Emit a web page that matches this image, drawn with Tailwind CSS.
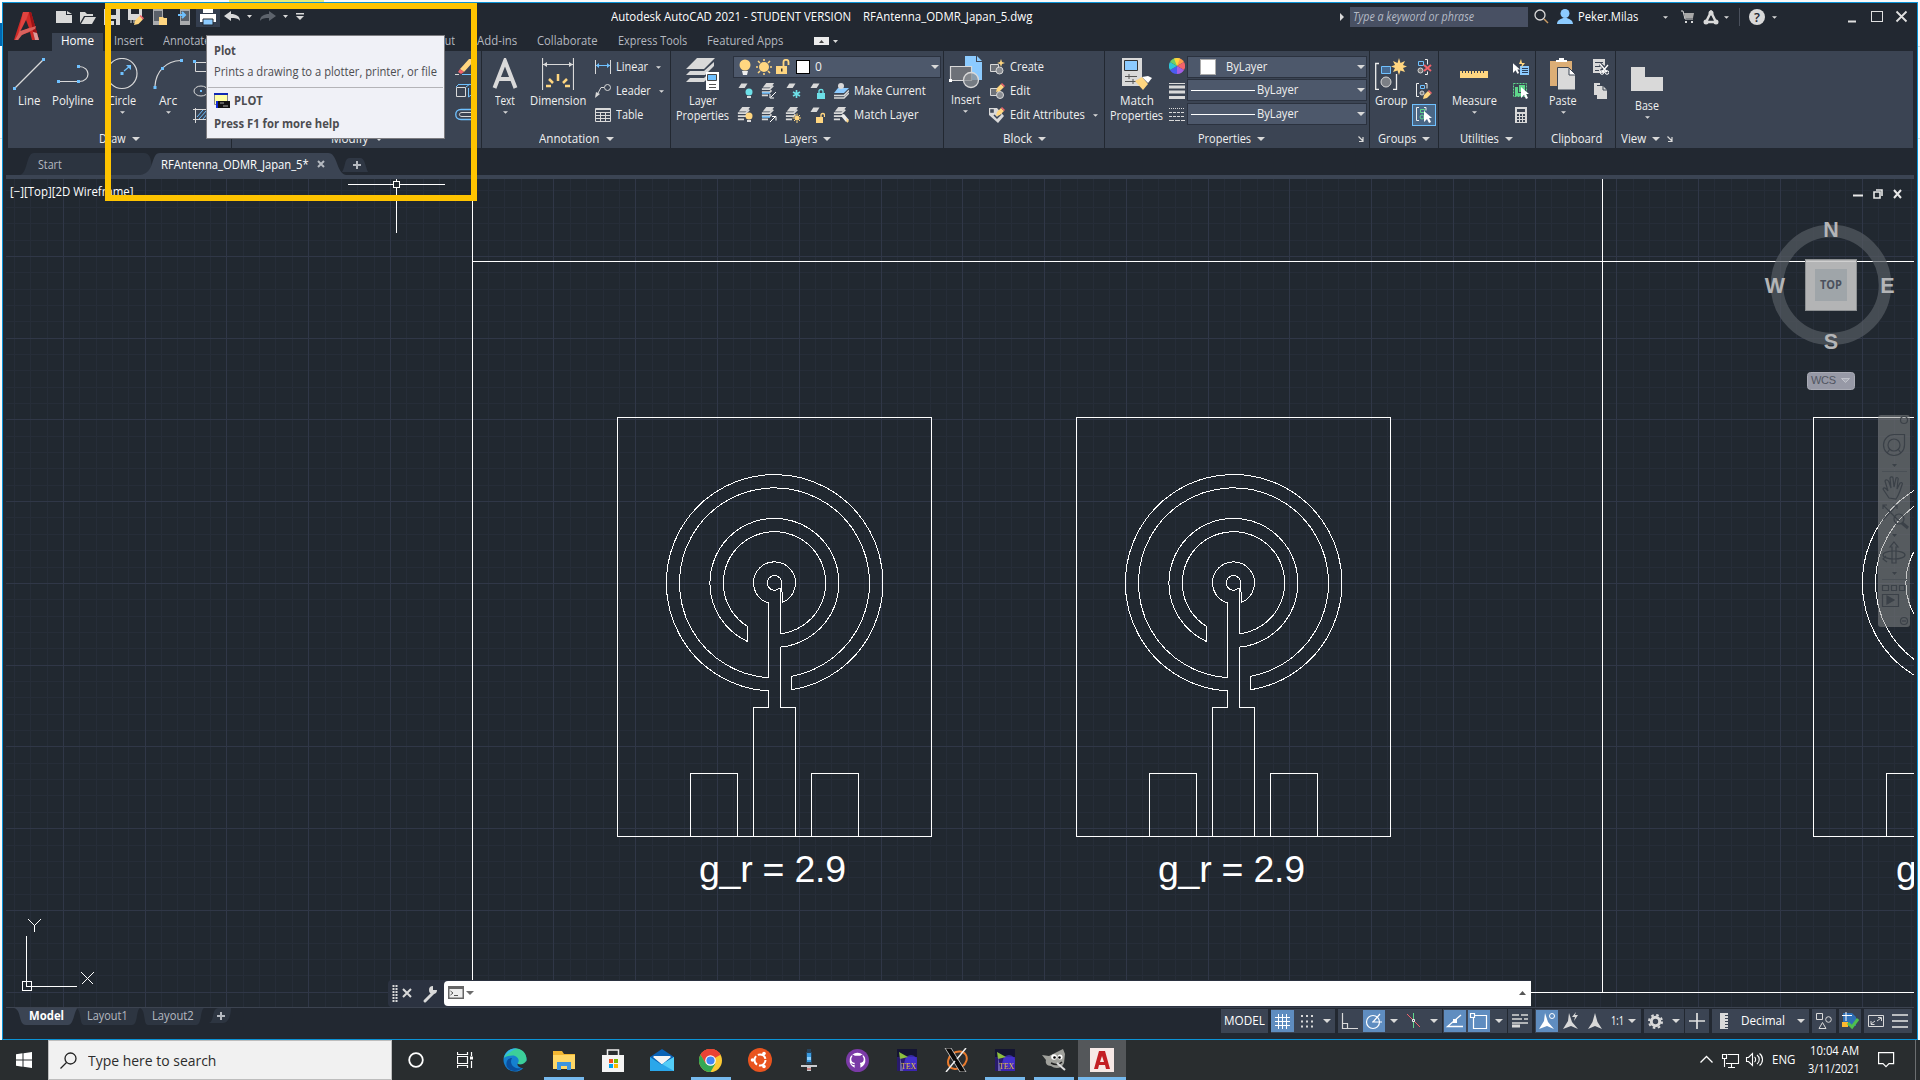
<!DOCTYPE html>
<html lang="en">
<head>
<meta charset="utf-8">
<title>Autodesk AutoCAD 2021</title>
<script src="https://cdn.jsdelivr.net/npm/@tailwindcss/browser@4"></script>
</head>
<body class="relative h-[1080px] w-[1920px] overflow-hidden bg-[#fbfbfb] font-['Open_Sans','Noto_Sans',sans-serif] text-[12px] leading-[14px] whitespace-nowrap text-[#f0f0f0]">

<!-- shared symbols -->
<svg class="hidden">
  <defs>
    <symbol id="dn" viewBox="0 0 8 4"><path d="M0 0h8L4 4z" fill="#d9d9d9"/></symbol>
    <symbol id="layers" viewBox="0 0 16 16"><path d="M6 0h9l-4 5H2z" fill="#d9d9d9"/><path d="M1 7h9l4-4M1 10.500h9l2-2M1 14h7" stroke="#d9d9d9" stroke-width="2" fill="none"/></symbol>
    <symbol id="sheet" viewBox="0 0 16 16"><path d="M5 1h11l-5 8H0z" fill="#d9d9d9"/></symbol>
    <symbol id="launch" viewBox="0 0 6 6"><path d="M.5.5l4 4M5 1v4.5H1" fill="none" stroke="#d9d9d9" stroke-width="1.2"/></symbol>
    <symbol id="pencil" viewBox="0 0 9 9"><path d="M0 9l1-4 4-4 3 3-4 4z" fill="#ffd680"/><path d="M5 1l1-1 3 3-1 1z" fill="#f2636b"/></symbol>
    <symbol id="ptr" viewBox="0 0 8 12"><path d="M0 0l8 7H5l2 4-2 1-2-4-3 3z" fill="#fff"/></symbol>
    <symbol id="tex" viewBox="0 0 20 22"><rect width="20" height="22" fill="#281a6c"/><rect y="0" width="20" height="8" fill="#141433"/><path d="M9 8h11v14H4z" fill="#3b25b0"/><circle cx="14" cy="12" r="6" fill="#4635d6" opacity=".7"/><path d="M2 3l9 5-8 2z" fill="#8dbf3f"/><path d="M3 8l3 14H3z" fill="#6a5fae"/><text x="4" y="19.500" font-family="Liberation Serif,serif" font-size="9" textLength="15" lengthAdjust="spacingAndGlyphs" fill="#e6c23a">TEX</text></symbol>
    <g id="antenna" fill="none" stroke="#fff">
      <path d="M617.500 417.500h314v419h-314zM690.500 836v-62.500h47V836M811.500 836v-62.500h47V836"/>
      <path d="M753.500 836V707.500H768.500V691A108.300 108.300 0 1 1 791.500 689.850V676.350A95 95 0 1 0 768.500 677.700V603A21 21 0 1 1 782.500 602.300L781.500 581A7.300 7.300 0 1 0 779.500 588.200"/>
      <path d="M780.500 588V633.750A51.200 51.200 0 1 0 747.500 626.400V641.500A64.500 64.500 0 1 0 780.500 647.100" stroke="none"/>
      <path d="M780.500 588V633.750A51.200 51.200 0 1 0 747.500 626.400V641.500A64.500 64.500 0 1 1 780.500 647.100V707.500H795.500V836"/>
    </g>
  </defs>
</svg>

<!-- slivers of the window behind -->
<div class="absolute top-0 left-[229px] h-[2px] w-[95px] bg-[#e4ec7c]"></div>
<div class="absolute top-[23px] left-0 h-[23px] w-[2px] bg-[#0067b0]"></div>
<div class="absolute top-[138px] left-0 h-px w-[1920px] bg-[#dcdcdc]"></div>
<div class="absolute top-[46px] right-0 h-px w-[4px] bg-[#dcdcdc]"></div>

<main class="relative mt-[2px] ml-[2px] flex h-[1038px] w-[1916px] flex-col border border-[#0b93d6] bg-[#222831]">
  <!-- title bar and ribbon tabs -->
  <header class="flex h-[48px] shrink-0">
    <div class="w-[49px] pt-[8px] pl-[10px]">
      <svg width="27" height="30" viewBox="0 0 27 30"><path d="M10 1h8l8 28h-7l-2-8-9 3-3 5H1z" fill="#cf2a27"/><path d="M10 1h6l-6 17-5 6z" fill="#e04440"/><path d="M16 1h2l8 28h-4z" fill="#9c1316"/><path d="M13 9l3 8-9 4z" fill="#222831"/><path d="M2 29l5-9 16-5-1 3-13 6-4 5z" fill="#d9625e"/><path d="M20 21l2 8h4l-2-7z" fill="#d99"/></svg>
    </div>
    <div class="flex flex-1 flex-col">
      <div class="flex h-[30px] items-center pb-[2px]">
        <svg class="block" width="260" height="20" viewBox="52 7 260 20">
          <path d="M56 11h10v4h6v8H56zM67 11l5 3h-5z" fill="#d9d9d9"/>
          <path d="M80 12h5l2 2h6v2h-9l-4 7z" fill="#d9d9d9"/><path d="M85 17h11l-4 7H81z" fill="#d9d9d9"/>
          <path d="M104 9h16v16h-16z" fill="#d9d9d9"/><path d="M108 9h8v6h-8zM108 19h8v6h-8z" fill="#222831"/><path d="M109 21h5v4h-5z" fill="#d9d9d9"/>
          <path d="M128 9h14v11h-14z" fill="#d9d9d9"/><path d="M131 9h8v5h-8z" fill="#222831"/><path d="M131 19v4M134 19v4" stroke="#d9d9d9"/><use href="#pencil" x="134" y="15" width="10" height="10"/>
          <rect x="153" y="9" width="10" height="16" fill="#a9abae"/><rect x="154" y="11" width="8" height="10" fill="#5a6069"/><path d="M159 17h4l1 1h3v7h-8z" fill="#ffd680"/>
          <rect x="180" y="9" width="10" height="16" fill="#a9abae"/><rect x="181" y="11" width="8" height="10" fill="#5a6069"/><path d="M178 15h6M182 12l3 3-3 3" stroke="#6fc1ff" stroke-width="2" fill="none"/>
          <rect x="196" y="7" width="24" height="20" fill="#343e4f"/><path d="M203 9h10v4h-10zM200 14h16v8h-16z" fill="#fff"/><path d="M203 19h10v6h-10z" fill="#8ccbff" stroke="#222831"/>
          <path d="M224 16l7-5v3c5 0 9 2 9 7-2-3-5-3-9-3v3z" fill="#d9d9d9"/>
          <path d="M247 15h5l-2.500 3zM283 15h5l-2.500 3z" fill="#d9d9d9"/>
          <path d="M276 16l-7-5v3c-5 0-9 2-9 7 2-3 5-3 9-3v3z" fill="#5d636c"/>
          <path d="M296 13h8v1.500h-8zM296 16h8l-4 4z" fill="#d9d9d9"/>
        </svg>
        <span data-w="240" class="ml-[299px] text-white">Autodesk AutoCAD 2021 - STUDENT VERSION</span>
        <span data-w="169" class="ml-[12px] text-white">RFAntenna_ODMR_Japan_5.dwg</span>
        <svg class="ml-[308px]" width="4" height="8"><path d="M0 0v8l4-4z" fill="#d9d9d9"/></svg>
        <div class="ml-[6px] flex h-[20px] w-[178px] items-center bg-[#485063] pl-[3px] text-[#b4bac5] italic"><span data-w="121">Type a keyword or phrase</span></div>
        <svg class="ml-[6px]" width="15" height="16"><circle cx="6" cy="6" r="5" fill="none" stroke="#d9d9d9" stroke-width="1.300"/><path d="M10 10l4 4" stroke="#c99a63" stroke-width="1.500"/></svg>
        <svg class="ml-[8px]" width="16" height="16"><circle cx="8" cy="4.500" r="4.500" fill="#8ccbff"/><path d="M0 15c0-4 4-5 6-6h4c2 1 6 2 6 6z" fill="#8ccbff"/></svg>
        <span data-w="60" class="ml-[5px] text-white">Peker.Milas</span>
        <svg class="ml-[25px]" width="5" height="3"><use href="#dn"/></svg>
        <svg class="ml-[13px]" width="14" height="14"><path d="M0 1h2l2 8h8" fill="none" stroke="#d9d9d9"/><path d="M3 3h10l-1 5H4z" fill="#a8a8a8"/><path d="M4 11h2v2H4zM10 11h2v2h-2z" fill="#d9d9d9"/></svg>
        <svg class="ml-[8px]" width="16" height="15"><path d="M8 2L3 12h10z" fill="none" stroke="#d9d9d9" stroke-width="2.500"/><circle cx="8" cy="3" r="2.500" fill="#d9d9d9"/><circle cx="3" cy="12" r="2.500" fill="#d9d9d9"/><circle cx="13" cy="12" r="2.500" fill="#d9d9d9"/></svg>
        <svg class="ml-[5px]" width="5" height="3"><use href="#dn"/></svg>
        <div class="ml-[10px] h-[18px] w-px bg-[#4a505c]"></div>
        <div class="ml-[9px] flex h-[16px] w-[16px] items-center justify-center rounded-full bg-[#d9d9d9] text-[13px] font-semibold text-[#222831]">?</div>
        <svg class="ml-[7px]" width="5" height="3"><use href="#dn"/></svg>
        <svg class="ml-[71px]" width="60" height="14"><path d="M0 11.500h8" stroke="#e0e0e0" stroke-width="2"/><rect x="23.500" y="1.500" width="11" height="10" fill="none" stroke="#e0e0e0"/><path d="M48.500 1.500l10 10M58.500 1.500l-10 10" stroke="#e0e0e0" stroke-width="1.800"/></svg>
      </div>
      <nav class="flex h-[18px] items-center pb-[2px] text-[#b5b9c0]">
        <div class="-mb-[2px] flex h-[18px] w-[51px] items-center justify-center bg-[#3b4453] pb-[2px] text-white"><span data-w="33">Home</span></div>
        <span data-w="29" class="ml-[11px]">Insert</span>
        <span data-w="48" class="ml-[20px]">Annotate</span>
        <span data-w="35" class="ml-[209px]">Output</span>
        <span data-w="40" class="ml-[22px]">Add-ins</span>
        <span data-w="61" class="ml-[20px]">Collaborate</span>
        <span data-w="69" class="ml-[20px]">Express Tools</span>
        <span data-w="76" class="ml-[20px]">Featured Apps</span>
        <svg class="ml-[31px]" width="26" height="8"><rect width="15" height="8" fill="#ececec"/><path d="M5 6h5l-2.500-3z" fill="#444"/><path d="M19 3h5l-2.500 3z" fill="#d9d9d9"/></svg>
      </nav>
    </div>
  </header>

  <!-- ribbon -->
  <div class="ml-[5px] flex h-[97px] w-[1905px] shrink-0 gap-px">
    <!-- Draw -->
    <section class="flex h-full w-[223px] flex-col bg-[#3b4453]">
      <div class="flex h-[79px]">
        <div class="flex w-[42px] flex-col items-center pt-[7px]"><svg width="32" height="32"><path d="M2 30L30 2" stroke="#d9d9d9" stroke-width="1.300"/><path d="M0 29h3v3H0zM29 0h3v3h-3z" fill="#6fc1ff"/></svg><span data-w="22" class="mt-[4px]">Line</span></div>
        <div class="flex w-[45px] flex-col items-center pt-[7px]"><svg width="32" height="32"><path d="M2 23.500h20c12 0 12-15 0-15" fill="none" stroke="#d9d9d9" stroke-width="1.200"/><path d="M0 22h3v3H0zM20 22h3v3h-3zM20 7h3v3h-3z" fill="#6fc1ff"/></svg><span data-w="42" class="mt-[4px]">Polyline</span></div>
        <div class="ml-[4px] flex w-[46px] flex-col items-center pt-[7px]"><svg width="32" height="32"><circle cx="16" cy="15.500" r="15" fill="none" stroke="#d9d9d9" stroke-width="1.200"/><path d="M18 13l6-5" stroke="#6fc1ff" stroke-width="1.200"/><path d="M14.500 14h3v3h-3zM20 7h5v5z" fill="#6fc1ff"/></svg><span data-w="28" class="mt-[4px]">Circle</span><svg class="mt-[3px]" width="5" height="3"><use href="#dn"/></svg></div>
        <div class="flex w-[46px] flex-col items-center pt-[7px]"><svg width="32" height="32"><path d="M3 28C4 13 14 3 29 2.500" fill="none" stroke="#d9d9d9" stroke-width="1.200"/><path d="M1.500 28h3v3h-3zM28 1h3v3h-3zM9 9h3v3H9z" fill="#6fc1ff"/></svg><span data-w="18" class="mt-[4px]">Arc</span><svg class="mt-[3px]" width="5" height="3"><use href="#dn"/></svg></div>
        <svg class="mt-[9px] ml-[2px]" width="30" height="66"><path d="M2.500 2.500h24v9h-24z" fill="none" stroke="#d9d9d9"/><path d="M0 0h3v3H0z" fill="#6fc1ff"/><ellipse cx="8" cy="31" rx="7" ry="5" fill="none" stroke="#d9d9d9"/><path d="M7 30h2v2H7z" fill="#6fc1ff"/><path d="M2.500 48v15M0 49.500h16M0 59.500h16" stroke="#d9d9d9"/><path d="M4 57l6-7M6 59l8-9M10 59l5-6" stroke="#6fc1ff"/></svg>
      </div>
      <div class="flex h-[18px] items-center pl-[91px]"><span data-w="27">Draw</span><svg class="ml-[6px]" width="8" height="4"><use href="#dn"/></svg></div>
    </section>
    <!-- Modify -->
    <section class="flex h-full w-[249px] flex-col bg-[#3b4453]">
      <div class="flex h-[79px] justify-end pr-[8px]">
        <svg class="mt-[8px]" width="18" height="64"><path d="M5 10L14 0h4v3l-9 10z" fill="#ffd680"/><path d="M5 10l4 3-3 2-3-2z" fill="#f2636b"/><path d="M0 15.500h4" stroke="#d9d9d9"/><path d="M7 15.500h11" stroke="#6fc1ff"/><path d="M1.500 28.500h9v9h-9z" fill="none" stroke="#d9d9d9"/><path d="M4 25.500h13M1 28l3-3M11 28l4-3M13.500 29v9l4-3v-9" fill="none" stroke="#6fc1ff"/><path d="M18 50.500H6c-7 0-7 10 0 10h12" fill="none" stroke="#6fc1ff" stroke-width="1.300"/><path d="M18 53.500H7c-3.500 0-3.500 4 0 4h11" fill="none" stroke="#d9d9d9"/></svg>
      </div>
      <div class="flex h-[18px] items-center pl-[99px]"><span data-w="37">Modify</span><svg class="ml-[7px]" width="8" height="4"><use href="#dn"/></svg></div>
    </section>
    <!-- Annotation -->
    <section class="flex h-full w-[188px] flex-col bg-[#3b4453]">
      <div class="flex h-[79px]">
        <div class="ml-px flex w-[44px] flex-col items-center pt-[7px]"><svg width="32" height="32"><path d="M5.500 30L16 3l10.500 27M9.500 21h13" fill="none" stroke="#d9d9d9" stroke-width="4"/></svg><span data-w="20" class="mt-[4px]">Text</span><svg class="mt-[3px]" width="5" height="3"><use href="#dn"/></svg></div>
        <div class="flex w-[62px] flex-col items-center pt-[7px]"><svg width="32" height="32"><path d="M.500 0v32M31.500 0v32M1 6.500h30" stroke="#d9d9d9" stroke-width="1.200"/><path d="M1 6.500l4-2.500v5zM31 6.500L27 4v5z" fill="#d9d9d9"/><path d="M4 28h5M23 28h5M7 21l4 4M25 21l-4 4M16 16v7" stroke="#ffd680" stroke-width="2.500"/></svg><span data-w="56" class="mt-[4px]">Dimension</span></div>
        <div class="ml-[6px] flex flex-col pt-[4px]">
          <div class="flex h-[24px] items-center"><svg width="16" height="16"><path d="M.500 1v14M15.500 1v14" stroke="#d9d9d9"/><path d="M1 6.500h14" stroke="#6fc1ff"/><path d="M1 6.500L4 4v5zM15 6.500L12 4v5z" fill="#6fc1ff"/></svg><span data-w="32" class="ml-[5px]">Linear</span><svg class="ml-[8px]" width="5" height="3"><use href="#dn"/></svg></div>
          <div class="flex h-[24px] items-center"><svg width="16" height="16"><circle cx="12.500" cy="4.500" r="3" fill="none" stroke="#d9d9d9"/><path d="M9 4.500H6L2 12" fill="none" stroke="#d9d9d9"/><path d="M0 15l1-6 4 2z" fill="#d9d9d9"/></svg><span data-w="35" class="ml-[5px]">Leader</span><svg class="ml-[8px]" width="5" height="3"><use href="#dn"/></svg></div>
          <div class="flex h-[24px] items-center"><svg width="16" height="16"><path d="M.500 1.500h15v13H.500zM1 5.500h14M1 8.500h14M1 11.500h14M5.500 5v9M10.500 5v9M1 2.500h14" fill="none" stroke="#d9d9d9"/></svg><span data-w="27" class="ml-[5px]">Table</span></div>
        </div>
      </div>
      <div class="flex h-[18px] items-center pl-[57px]"><span data-w="60">Annotation</span><svg class="ml-[7px]" width="8" height="4"><use href="#dn"/></svg></div>
    </section>
    <!-- Layers -->
    <section class="flex h-full w-[272px] flex-col bg-[#3b4453]">
      <div class="flex h-[79px]">
        <div class="ml-px flex w-[61px] flex-col items-center pt-[7px]"><svg width="34" height="32"><path d="M11 0h18L18 11H0zM4 13h14l10-9v4l-9 9H0zM4 20h14l3-3v4l-3 3H0z" fill="#d9d9d9"/><path d="M20 14h13v18H20z" fill="#fff"/><path d="M21.500 16.500h9v6h-9z" fill="#6fc1ff" stroke="#444"/><path d="M23 26.500h7M23 29.500h7" stroke="#555"/></svg><span data-w="28" class="mt-[4px]">Layer</span><span data-w="53" class="mt-px">Properties</span></div>
        <div class="flex w-[208px] flex-col pt-[5px]">
          <div class="flex h-[22px] items-center border border-[#2b323f] bg-[#4d586b] pl-[5px]">
            <svg width="12" height="16"><circle cx="6" cy="6" r="5.500" fill="#ffd680"/><path d="M3 12h6l-1 4H4z" fill="#eee"/></svg>
            <svg class="ml-[5px]" width="16" height="16"><circle cx="8" cy="8" r="5" fill="#ffd680"/><path d="M8 0v2M8 14v2M0 8h2M14 8h2M2 2l2 2M12 12l2 2M14 2l-2 2M2 14l2-2" stroke="#ffd680" stroke-width="1.500"/></svg>
            <svg class="ml-[3px]" width="16" height="16"><path d="M1 7h11v8H1z" fill="#ffd680"/><path d="M8.500 7V3c0-3 5-3 5 0v3" fill="none" stroke="#ffd680" stroke-width="1.800"/><path d="M6 9.500h1.500v3H6z" fill="#333"/></svg>
            <div class="ml-[5px] h-[14px] w-[14px] border border-black bg-white"></div>
            <span class="ml-[5px]">0</span><svg class="mr-[1px] ml-auto" width="8" height="4"><use href="#dn"/></svg>
          </div>
          <div class="mt-[1px] flex h-[24px] items-center gap-[8px] pl-[4px]">
            <svg width="16" height="16"><use href="#sheet" width="12" height="9"/><circle cx="12" cy="9" r="3.500" fill="#6de0e8"/><path d="M10 13h4v2h-4z" fill="#ddd"/></svg>
            <svg width="16" height="16"><use href="#layers" width="14" height="14"/><path d="M1 10h8" stroke="#6fc1ff" stroke-width="1.500"/><path d="M15 9l-5 5M9 11v4h4" stroke="#fff" fill="none"/></svg>
            <svg width="16" height="16"><use href="#sheet" width="12" height="9"/><path d="M11.500 7v8M8 9l7 4M15 9l-7 4" stroke="#6de0e8" stroke-width="1.600"/></svg>
            <svg width="16" height="16"><use href="#sheet" width="12" height="9"/><path d="M8 10h8v6H8z" fill="#6de0e8"/><path d="M10 10V8c0-2 4-2 4 0v2" fill="none" stroke="#6de0e8" stroke-width="1.300"/></svg>
            <svg width="16" height="16"><path d="M5 5h11l-5 5H1z" fill="#8ccbff"/><circle cx="8" cy="3" r="3" fill="#d9d9d9"/><path d="M1 12.500h10l5-5M1 15h10l5-5" stroke="#d9d9d9" stroke-width="1.500" fill="none"/></svg>
            <span data-w="72" class="-ml-[3px]">Make Current</span>
          </div>
          <div class="flex h-[24px] items-center gap-[8px] pl-[4px]">
            <svg width="16" height="16"><use href="#layers" width="14" height="14"/><circle cx="12" cy="9" r="3.500" fill="#ffd680"/><path d="M10 13h4v2h-4z" fill="#ddd"/></svg>
            <svg width="16" height="16"><use href="#layers" width="14" height="14"/><path d="M1 10h8" stroke="#6fc1ff" stroke-width="1.500"/><path d="M9 15l5-5M11 9.500h4v4" stroke="#fff" fill="none"/></svg>
            <svg width="16" height="16"><use href="#layers" width="14" height="14"/><circle cx="12" cy="11" r="2.500" fill="#ffd680"/><path d="M12 6.500v2M12 14v2M7.500 11h2M14.500 11h1.500M9 8l1 1M15 8l-1 1M9 14l1-1M15 14l-1-1" stroke="#ffd680"/></svg>
            <svg width="16" height="16"><use href="#sheet" width="12" height="9"/><path d="M7 10h7v6H7z" fill="#ffd680"/><path d="M12 10V8c0-2 3.500-2 3.500 0v2" fill="none" stroke="#ffd680" stroke-width="1.300"/></svg>
            <svg width="16" height="16"><use href="#layers" width="14" height="14"/><path d="M8 9l3-2 5 6-3 2z" fill="#eee"/><path d="M13 11l3 3-2 2z" fill="#ffd680"/></svg>
            <span data-w="65" class="-ml-[3px]">Match Layer</span>
          </div>
        </div>
      </div>
      <div class="flex h-[18px] items-center pl-[113px]"><span data-w="33">Layers</span><svg class="ml-[6px]" width="8" height="4"><use href="#dn"/></svg></div>
    </section>
    <!-- Block -->
    <section class="flex h-full w-[160px] flex-col bg-[#3b4453]">
      <div class="flex h-[79px]">
        <div class="flex w-[43px] flex-col items-center pt-[5px]"><svg width="34" height="34"><path d="M16 0h11v6h6v18H16z" fill="#8ccbff"/><path d="M28 0l5 5h-5z" fill="#8ccbff"/><path d="M1.500 10.500h21v14h-21z" fill="#6d7178" stroke="#d9d9d9" stroke-width="1.200"/><circle cx="22" cy="24" r="7.500" fill="#8a8d92" fill-opacity=".75" stroke="#d9d9d9" stroke-width="1.300"/><path d="M0 23h3v3H0z" fill="#fff"/></svg><span data-w="29" class="mt-[3px]">Insert</span><svg class="mt-[3px]" width="5" height="3"><use href="#dn"/></svg></div>
        <div class="ml-[2px] flex flex-col pt-[4px]">
          <div class="flex h-[24px] items-center"><svg width="16" height="16"><path d="M1.500 5.500h8v7h-8z" fill="#6d7178" stroke="#d9d9d9"/><circle cx="10.500" cy="11.500" r="3.500" fill="#8a8d92" stroke="#d9d9d9"/><path d="M12 0l1 3 3 1-3 1-1 3-1-3-3-1 3-1z" fill="#ffd680"/></svg><span data-w="34" class="ml-[5px]">Create</span></div>
          <div class="flex h-[24px] items-center"><svg width="16" height="16"><path d="M1.500 5.500h8v7h-8z" fill="#6d7178" stroke="#d9d9d9"/><circle cx="11" cy="12" r="3.500" fill="#8a8d92" stroke="#d9d9d9"/><use href="#pencil" x="7" width="9" height="9"/></svg><span data-w="20" class="ml-[5px]">Edit</span></div>
          <div class="flex h-[24px] items-center"><svg width="16" height="16"><path d="M0 1h8l7 8-6 7-9-8z" fill="#d9d9d9"/><path d="M2 3h2v2H2zM5 8l3 3 4-4" fill="none" stroke="#3b4453" stroke-width="1.500"/><use href="#pencil" x="7" width="9" height="9"/></svg><span data-w="75" class="ml-[5px]">Edit Attributes</span><svg class="ml-[8px]" width="5" height="3"><use href="#dn"/></svg></div>
        </div>
      </div>
      <div class="flex h-[18px] items-center pl-[59px]"><span data-w="29">Block</span><svg class="ml-[6px]" width="8" height="4"><use href="#dn"/></svg></div>
    </section>
    <!-- Properties -->
    <section class="flex h-full w-[264px] flex-col bg-[#3b4453]">
      <div class="flex h-[79px]">
        <div class="ml-[2px] flex w-[59px] flex-col items-center pt-[7px]"><svg width="32" height="32"><path d="M1 0h20v28H1z" fill="#d9d9d9"/><path d="M3.500 2.500h13v10h-13z" fill="#8ccbff" stroke="#333"/><path d="M4 18.500h12M4 23.500h12M8 16v5M12 21v5" stroke="#555"/><path d="M14 23l7-4 6 7-5 6z" fill="#ffd680"/><path d="M21 19l6-1 4 2-4 5z" fill="#fff"/></svg><span data-w="34" class="mt-[4px]">Match</span><span data-w="53" class="mt-px">Properties</span></div>
        <div class="ml-[3px] flex w-[18px] flex-col pt-[7px]">
          <svg width="16" height="16"><path d="M8 8V0a8 8 0 0 1 7 4z" fill="#ff9a4a"/><path d="M8 8l7-4a8 8 0 0 1 0 8z" fill="#f2636b"/><path d="M8 8l7 4a8 8 0 0 1-7 4z" fill="#a45ee5"/><path d="M8 8v8a8 8 0 0 1-7-4z" fill="#4b5cf0"/><path d="M8 8l-7 4a8 8 0 0 1 0-8z" fill="#2fc4d8"/><path d="M8 8L1 4a8 8 0 0 1 7-4z" fill="#6cd06a"/><path d="M8 8L5 .600A8 8 0 0 1 11 .600z" fill="#ffd33d"/></svg>
          <svg class="mt-[8px]" width="16" height="18"><path d="M0 .500h16M0 5h16M0 10h16M0 15.500h16" stroke="#d9d9d9" stroke-width="3"/><path d="M0 .500h16" stroke="#3b4453"/></svg>
          <svg class="mt-[8px]" width="16" height="14"><path d="M0 .500h16" stroke="#d9d9d9" stroke-dasharray="1 1"/><path d="M0 4.500h16M0 8.500h16" stroke="#d9d9d9" stroke-dasharray="3 1"/><path d="M0 12.500h16" stroke="#d9d9d9" stroke-dasharray="5 1"/></svg>
        </div>
        <div class="flex w-[180px] flex-col pt-[5px]">
          <div class="flex h-[22px] items-center border border-[#2b323f] bg-[#4d586b] pl-[12px]"><div class="h-[16px] w-[16px] border border-[#aaa] bg-white"></div><span data-w="41" class="ml-[10px]">ByLayer</span><svg class="mr-[1px] ml-auto" width="8" height="4"><use href="#dn"/></svg></div>
          <div class="mt-px flex h-[22px] items-center border border-[#2b323f] bg-[#4d586b] pl-[3px]"><div class="h-px w-[64px] bg-white"></div><span data-w="41" class="ml-[2px]">ByLayer</span><svg class="mr-[1px] ml-auto" width="8" height="4"><use href="#dn"/></svg></div>
          <div class="mt-[2px] flex h-[22px] items-center border border-[#2b323f] bg-[#4d586b] pl-[3px]"><div class="h-px w-[64px] bg-white"></div><span data-w="41" class="ml-[2px]">ByLayer</span><svg class="mr-[1px] ml-auto" width="8" height="4"><use href="#dn"/></svg></div>
        </div>
      </div>
      <div class="flex h-[18px] items-center pl-[93px]"><span data-w="53">Properties</span><svg class="ml-[6px]" width="8" height="4"><use href="#dn"/></svg><svg class="mr-[5px] ml-auto" width="6" height="6"><use href="#launch"/></svg></div>
    </section>
    <!-- Groups -->
    <section class="flex h-full w-[68px] flex-col bg-[#3b4453]">
      <div class="flex h-[79px]">
        <div class="flex w-[42px] flex-col items-center pt-[7px]"><svg width="32" height="32"><path d="M4 5.500H.700V31.500H4M18 31.500h3.500V16" fill="none" stroke="#eee" stroke-width="1.300"/><path d="M6.500 8.500h9v7h-9z" fill="#466a92" stroke="#6fc1ff"/><circle cx="11" cy="24" r="5" fill="#7b7f85" stroke="#d9d9d9"/><path d="M24 0l1.500 5L30 3l-2 4 4 1.500L28 10l2 4-4.500-1.500L24 17l-1.500-4.500L18 14l2-4-4-1.500L20 7l-2-4 4.500 2z" fill="#ffd680"/></svg><span data-w="33" class="mt-[4px]">Group</span></div>
        <div class="flex w-[24px] flex-col items-center pt-[4px]">
          <div class="flex h-[24px] items-center"><svg width="16" height="16"><path d="M2.500 2.500h5v4h-5z" fill="none" stroke="#6fc1ff"/><circle cx="4.500" cy="11.500" r="2.500" fill="#777" stroke="#d9d9d9"/><path d="M9 .500h2.500v5M9 15.500h2.500v-3" fill="none" stroke="#eee"/><path d="M8 6l7 6M15 6l-7 6" stroke="#f2636b" stroke-width="2"/></svg></div>
          <div class="flex h-[24px] items-center"><svg width="16" height="16"><path d="M3 .500H.500v13H3M9 .500h2v5" fill="none" stroke="#eee"/><path d="M4.500 2.500h4v3h-4z" fill="none" stroke="#6fc1ff"/><circle cx="6" cy="10" r="2" fill="#777" stroke="#d9d9d9"/><use href="#pencil" x="7" y="7" width="9" height="9"/></svg></div>
          <div class="mt-[1px] flex h-[22px] w-[24px] items-center justify-center border border-[#6fc1ff] bg-[#4a6786]"><svg width="16" height="16"><path d="M3 .500H.500v13H3M8 .500h2v3" fill="none" stroke="#eee"/><path d="M4.500 2.500h4v3h-4z" fill="none" stroke="#5fd68b"/><circle cx="6" cy="10" r="2" fill="none" stroke="#5fd68b"/><use href="#ptr" x="8" y="4" width="8" height="12"/></svg></div>
        </div>
      </div>
      <div class="flex h-[18px] items-center pl-[8px]"><span data-w="38">Groups</span><svg class="ml-[6px]" width="8" height="4"><use href="#dn"/></svg></div>
    </section>
    <!-- Utilities -->
    <section class="flex h-full w-[96px] flex-col bg-[#3b4453]">
      <div class="flex h-[79px]">
        <div class="ml-[10px] flex w-[50px] flex-col items-center pt-[7px]"><svg width="32" height="32"><path d="M2 13h28v7H2z" fill="#ffd680"/><path d="M4.500 13v2M7.500 13v2M10.500 13v2M13.500 13v3M16.500 13v2M19.500 13v2M22.500 13v2M25.500 13v2" stroke="#3b4453"/></svg><span data-w="45" class="mt-[4px]">Measure</span><svg class="mt-[3px]" width="5" height="3"><use href="#dn"/></svg></div>
        <div class="ml-[14px] flex w-[16px] flex-col pt-[4px]">
          <div class="flex h-[24px] items-center"><svg width="16" height="16"><path d="M7 7h9v9H7z" fill="#8ccbff"/><path d="M9 9.500h6M9 11.500h6M9 13.500h6" stroke="#2b3f5a"/><path d="M8 0L6 5h3l-1 4 4-5H9z" fill="#ffd680"/><use href="#ptr" y="4" width="7" height="11"/></svg></div>
          <div class="flex h-[24px] items-center"><svg width="16" height="16"><path d="M.500.500h13v13H.500z" fill="none" stroke="#5fd68b" stroke-dasharray="2 1"/><path d="M2 4h3v6h4v3H2zM6 2h6v7H6z" fill="#5fd68b"/><use href="#ptr" x="8" y="4" width="8" height="12"/></svg></div>
          <div class="flex h-[24px] items-center"><svg width="16" height="16"><path d="M2 0h12v16H2z" fill="#d9d9d9"/><path d="M4 2h8v3H4z" fill="#3b4453"/><path d="M4 8h8M4 11h8M4 14h8" stroke="#3b4453" stroke-width="2" stroke-dasharray="2 1"/></svg></div>
        </div>
      </div>
      <div class="flex h-[18px] items-center pl-[21px]"><span data-w="39">Utilities</span><svg class="ml-[6px]" width="8" height="4"><use href="#dn"/></svg></div>
    </section>
    <!-- Clipboard -->
    <section class="flex h-full w-[79px] flex-col bg-[#3b4453]">
      <div class="flex h-[79px]">
        <div class="ml-[6px] flex w-[42px] flex-col items-center pt-[7px]"><svg width="28" height="32"><path d="M1 3h22v25H1z" fill="#dcae76"/><path d="M7 4V2h3V0h5v2h3v2z" fill="#fff"/><path d="M8.500 9.500h11l7 7V32h-18z" fill="#d9d9d9" stroke="#3b4453"/><path d="M20 10v7h7z" fill="#fff" stroke="#3b4453"/></svg><span data-w="28" class="mt-[4px]">Paste</span><svg class="mt-[3px]" width="5" height="3"><use href="#dn"/></svg></div>
        <div class="ml-[9px] flex w-[16px] flex-col pt-[4px]">
          <div class="flex h-[24px] items-center"><svg width="16" height="16"><path d="M0 0h12v14H0z" fill="#d9d9d9"/><path d="M2 3.500h8M2 7.500h5M2 11.500h4" stroke="#3b4453"/><path d="M7 5l8 7M15 6l-7 6" stroke="#3b4453" stroke-width="3"/><path d="M7 5l7 8M15 6l-6 7" stroke="#fff" stroke-width="1.300"/><circle cx="9" cy="13.500" r="1.800" fill="none" stroke="#fff"/><circle cx="14" cy="13.500" r="1.800" fill="none" stroke="#fff"/></svg></div>
          <div class="flex h-[24px] items-center"><svg width="16" height="16"><path d="M1 0h6v2H4v10H1z" fill="#d9d9d9"/><path d="M4 3h6l4 4v9H4z" fill="#d9d9d9"/><path d="M10 3v4h4" fill="none" stroke="#3b4453"/></svg></div>
        </div>
      </div>
      <div class="flex h-[18px] items-center pl-[15px]"><span data-w="51">Clipboard</span></div>
    </section>
    <!-- View -->
    <section class="flex h-full w-[297px] flex-col bg-[#3b4453]">
      <div class="flex h-[79px]">
        <div class="ml-[10px] flex w-[42px] flex-col items-center pt-[16px]"><svg width="32" height="24"><path d="M0 0h14v10h18v14H0z" fill="#d9d9d9"/></svg><span data-w="24" class="mt-[8px]">Base</span><svg class="mt-[3px]" width="5" height="3"><use href="#dn"/></svg></div>
      </div>
      <div class="flex h-[18px] items-center pl-[5px]"><span data-w="25">View</span><svg class="ml-[6px]" width="8" height="4"><use href="#dn"/></svg><svg class="ml-[7px]" width="6" height="6"><use href="#launch"/></svg></div>
    </section>
  </div>

  <!-- drawing tabs -->
  <div class="relative flex h-[27px] shrink-0 items-center pt-[7px]">
    <svg class="absolute top-0 left-0" width="400" height="27" viewBox="3 148 400 27"><path d="M20 175c8-2 6-22 14-22h110c6 0 8 6 8 22z" fill="#2c3440"/><path d="M140 175c16-2 10-22 20-22h168c10 0 8 20 18 22z" fill="#3b4453"/><path d="M342 172c4-6 2-14 8-14h10c5 0 5 8 8 14z" fill="#2f3744"/><path d="M318 161l6 6M324 161l-6 6" stroke="#b5b9c0" stroke-width="2"/><path d="M353 165h8M357 161v8" stroke="#b5b9c0" stroke-width="2"/></svg>
    <span data-w="24" class="relative ml-[35px] text-[#b5b9c0]">Start</span>
    <span data-w="148" class="relative ml-[99px] text-white">RFAntenna_ODMR_Japan_5*</span>
  </div>
  <div class="ml-[3px] h-[4px] w-[1908px] shrink-0 bg-[#3b4453]"></div>

  <!-- model space -->
  <div class="relative ml-[3px] h-[828px] w-[1908px] shrink-0 overflow-hidden bg-[#212830]">
    <svg class="block" width="1908" height="828" viewBox="6 179 1908 828" shape-rendering="crispEdges">
      <g id="grid"></g>
      <path d="M472.500 179V980M472 261.500H1914M1602.500 179V992.500M1531 992.500H1914" stroke="#fff"/>
      <use href="#antenna"/><use href="#antenna" x="459"/><use href="#antenna" x="1196"/>
      <g font-family="Liberation Sans,Arial,sans-serif" font-size="37.500" fill="#fff" shape-rendering="auto">
        <text x="699" y="882" textLength="147">g_r = 2.9</text><text x="1158" y="882" textLength="147">g_r = 2.9</text><text x="1896" y="882">g</text>
      </g>
      <g fill="none" stroke="#fff">
        <path d="M26.500 936V986.500H77M22.500 981.500h9v9h-9zM28.500 919.500l6 6 6-6M34.500 925.500v6.500M81.500 972.500l12 12M93.500 972.500l-12 12"/>
        <path d="M348 184.500h45M399 184.500h46M396.500 179v2M396.500 188v45M393.500 181.500h6v6h-6z"/>
      </g>
      <!-- view cube -->
      <g shape-rendering="auto">
        <circle cx="1831" cy="285" r="54" fill="none" stroke="#565b63" stroke-opacity=".7" stroke-width="12.500"/>
        <g font-family="Liberation Sans,Arial,sans-serif" font-weight="700" font-size="21.500" fill="#b4b5b7" text-anchor="middle"><text x="1831" y="236.500">N</text><text x="1775" y="292.500">W</text><text x="1887.500" y="292.500">E</text><text x="1831" y="348.800">S</text></g>
        <rect x="1805.500" y="259.500" width="51" height="51" fill="#b3b4b5" stroke="#8d9092"/><path d="M1806 261.500h50" stroke="#d0d0d0"/><rect x="1815" y="269" width="32" height="32" fill="#9fa5a9"/>
        <text x="1820" y="289" font-family="Open Sans,sans-serif" font-weight="700" font-size="11.500" textLength="22" lengthAdjust="spacingAndGlyphs" fill="#4b515d">TOP</text>
        <rect x="1807.500" y="372.500" width="47" height="17" rx="3" fill="#9799a6" stroke="#a9abb5"/>
        <text x="1811" y="384" font-family="Liberation Sans,sans-serif" font-size="11" textLength="25" fill="#505561">WCS</text><path d="M1841.500 378.500h8l-4 4z" fill="#a7aab5" stroke="#c0c2ca"/>
        <g stroke="#e8e8e8" fill="none" stroke-width="2"><path d="M1853 195.500h10M1894 190l7 8M1901 190l-7 8"/><path d="M1874 192h6v6h-6zM1876 190h6v6" stroke-width="1.600"/></g>
      </g>
      <!-- navigation bar -->
      <g shape-rendering="auto">
        <rect x="1878" y="415" width="32" height="212" rx="3" fill="#8b8d8e" fill-opacity=".5"/>
        <g fill="none" stroke="#3b4148" stroke-width="1.200">
          <circle cx="1904" cy="420" r="3.500"/><circle cx="1904" cy="621" r="3.500"/><path d="M1902 621h4"/>
          <path d="M1894 434.500h10.500V445a10.500 10.500 0 1 1-10.500-10.500z"/><circle cx="1894" cy="445" r="6"/><path d="M1887 453l3-4M1901 453l-3-4"/>
          <path d="M1889 498l-6-9c1-2 3-1 5 2l-3-10c1-2 3-1 4 1l2 6-1-10c1-2 3-1 3 0l1 9 2-9c1-1 3 0 2 2l-1 9 3-6c2-1 3 0 2 2-2 6-3 10-6 14z"/>
          <path d="M1883 505l16 16M1897 505l-14 15M1883 509v-4h4M1893 505h4v4"/><circle cx="1899" cy="519" r="5"/><path d="M1902 523l6 5" stroke-width="3"/>
          <ellipse cx="1894" cy="555" rx="11" ry="4"/><path d="M1892 563v-16h-2l4-5 4 5h-2v16zM1886 556l-3 3 4 3"/>
          <path d="M1882.500 585.500h6v5h-6zM1891.500 585.500h5v5h-5zM1899.500 585.500h5v5h-5zM1882.500 594.500h16v12h-16z"/><path d="M1887 596v8l7-4z" fill="#3b4148"/>
          <path d="M1882 471.500h25M1882 579.500h25" stroke="#4a5056"/>
        </g>
        <path d="M1892 464h5l-2.500 3zM1892 534h5l-2.500 3zM1892 572h5l-2.500 3z" fill="#3b4148"/>
      </g>
    </svg>
    <span data-w="123" class="absolute top-[6px] left-[4px] text-white">[−][Top][2D Wireframe]</span>
    <!-- floating command line -->
    <div class="absolute top-[801px] left-[382px] flex h-[27px] w-[1143px] items-center rounded-l bg-[#2b3240]">
      <svg class="ml-[4px]" width="52" height="20"><path d="M1.500 1v18M4.500 1v18" stroke="#d9d9d9" stroke-width="2" stroke-dasharray="2 1"/><path d="M11 5l8 8M19 5l-8 8" stroke="#d9d9d9" stroke-width="2"/><path d="M33 17l8-8" stroke="#d9d9d9" stroke-width="3" stroke-linecap="round"/><path d="M45 6a4 4 0 1 1-4-4v4z" fill="#d9d9d9"/></svg>
      <div class="mb-px flex h-[25px] flex-1 items-center rounded-l-sm bg-white pl-[4px]">
        <svg width="28" height="14"><rect x=".750" y=".750" width="14.500" height="11.500" fill="#eee" stroke="#666" stroke-width="1.500"/><path d="M1 2h14" stroke="#666" stroke-width="2"/><path d="M2.500 5l2.500 2-2.500 2M6 9.500h4" stroke="#555" fill="none"/><path d="M18 5h8l-4 4z" fill="#6b6b6b"/></svg>
        <svg class="mr-[4px] ml-auto" width="8" height="4"><path d="M0 4h7L3.500 0z" fill="#555"/></svg>
      </div>
    </div>
  </div>
  <div class="ml-[3px] h-px w-[1908px] shrink-0 bg-[#3c4350]"></div>

  <!-- layout tabs and status bar -->
  <div class="relative flex h-[31px] shrink-0 items-start">
    <svg class="absolute top-0 left-0" width="240" height="18" viewBox="3 1008 240 18"><path d="M14 1008c8 2 4 17 12 17h42c6 0 6-15 10-17z" fill="#3b4453"/><path d="M76 1008c6 2 3 17 8 17h48c6 0 4-15 8-17zM140 1008c6 2 3 17 8 17h48c6 0 4-15 8-17z" fill="#2d3541"/><path d="M209 1023c6-2 2-15 10-15h12c0 8-3 15-8 15z" fill="#2d3541"/><path d="M217 1016h8M221 1012v8" stroke="#b5b9c0" stroke-width="2"/></svg>
    <span data-w="35" class="relative mt-px ml-[26px] font-bold text-white">Model</span>
    <span data-w="41" class="relative mt-px ml-[23px] text-[#b5b9c0]">Layout1</span>
    <span data-w="42" class="relative mt-px ml-[24px] text-[#b5b9c0]">Layout2</span>
    <div class="mt-px ml-[1027px] flex h-[24px] items-center">
      <div class="flex h-full w-[47px] items-center justify-center bg-[#3b4453] text-white"><span data-w="41">MODEL</span></div>
      <div class="ml-[3px] flex h-full w-[64px] items-center bg-[#3b4453]">
        <svg width="64" height="24" viewBox="0 0 64 24"><rect width="23" height="22" y="1" fill="#5f8dc0"/><path d="M7.500 5v15M11.500 5v15M15.500 5v15M4 8.500h15M4 12.500h15M4 16.500h15" stroke="#fff"/><path d="M30 7h13M30 12.500h13M30 17.500h13" stroke="#d9d9d9" stroke-width="2" stroke-dasharray="2 3"/><path d="M52 10h8l-4 4z" fill="#d9d9d9"/></svg>
      </div>
      <div class="ml-[3px] flex h-full w-[104px] items-center bg-[#3b4453]">
        <svg width="104" height="24"><path d="M4.500 4v15.500H20M4.500 14.500h5v5" fill="none" stroke="#d9d9d9" stroke-width="1.200"/><rect x="25" y="1" width="22" height="22" fill="#5f8dc0"/><circle cx="35" cy="13" r="6.500" fill="none" stroke="#fff" stroke-width="1.200"/><path d="M35 13l7-8M34 13h10" stroke="#fff" stroke-width="1.200"/><path d="M52 10h8l-4 4zM92 10h8l-4 4z" fill="#d9d9d9"/><path d="M69 5l13 13" stroke="#f2636b"/><path d="M75.500 4v15" stroke="#5fd68b"/><path d="M74.500 10.500h2v2h-2z" fill="#3b4453" stroke="#eee"/></svg>
      </div>
      <div class="ml-px flex h-full w-[64px] items-center bg-[#3b4453]">
        <svg width="64" height="24"><rect x="1" y="1" width="22" height="22" fill="#5f8dc0"/><path d="M18 6L4.500 17.500H20" fill="none" stroke="#fff" stroke-width="1.300"/><path d="M10 10h4v4h-4z" fill="#fff"/><rect x="25" y="1" width="22" height="22" fill="#5f8dc0"/><path d="M32 6.500h11.500v13h-13V9M27.500 4.500h4v4h-4z" fill="none" stroke="#fff" stroke-width="1.200"/><path d="M52 10h8l-4 4z" fill="#d9d9d9"/></svg>
      </div>
      <div class="ml-px flex h-full w-[24px] items-center justify-center bg-[#3b4453]"><svg width="16" height="14"><path d="M0 1h7M9 1h7M0 5h10M12 5h4M0 9h16" stroke="#d9d9d9" stroke-width="1.500"/><path d="M0 12h8" stroke="#d9d9d9" stroke-width="3"/></svg></div>
      <div class="ml-[3px] flex h-full w-[106px] items-center bg-[#3b4453]">
        <svg width="76" height="24"><rect x="1" y="1" width="22" height="22" fill="#5f8dc0"/><path d="M10 4l3 9 6 7-7-3-8 3 5-8z" fill="#fff"/><circle cx="17" cy="7" r="2.500" fill="none" stroke="#fff"/><path d="M34 4l3 9 6 7-7-3-8 3 5-8z" fill="#d9d9d9"/><path d="M41 3l-4 5h3l-1 4 4-6h-3z" fill="#d9d9d9"/><path d="M60 4l2.500 9 4.500 7-7-3-7 3 4.500-7z" fill="#d9d9d9"/></svg>
        <span data-w="13" class="text-white">1:1</span><svg class="ml-[4px]" width="8" height="4"><use href="#dn"/></svg>
      </div>
      <div class="ml-[3px] flex h-full w-[40px] items-center bg-[#3b4453]"><svg class="ml-[4px]" width="15" height="15"><circle cx="7.500" cy="7.500" r="4.200" fill="none" stroke="#d9d9d9" stroke-width="3"/><circle cx="7.500" cy="7.500" r="6.500" fill="none" stroke="#d9d9d9" stroke-width="2" stroke-dasharray="2.550 2.550"/></svg><svg class="ml-[9px]" width="8" height="4"><use href="#dn"/></svg></div>
      <div class="ml-px flex h-full w-[24px] items-center justify-center bg-[#3b4453]"><svg width="16" height="16"><path d="M8 0v16M0 8h16" stroke="#e0e0e0" stroke-width="1.700"/></svg></div>
      <div class="ml-[3px] flex h-full w-[97px] items-center bg-[#3b4453]"><svg class="ml-[8px]" width="8" height="16"><path d="M0 0h8v2H5v1h3v2H5v1h3v2H5v1h3v2H5v1h3v2H5v1h3v1H0z" fill="#d9d9d9"/></svg><span data-w="44" class="ml-[13px] text-white">Decimal</span><svg class="ml-[12px]" width="8" height="4"><use href="#dn"/></svg></div>
      <div class="ml-[3px] flex h-full w-[24px] items-center justify-center bg-[#3b4453]"><svg width="16" height="16"><path d="M.500.500h6v6h-6zM6.500 9.500l3.500 6H3z" fill="none" stroke="#d9d9d9"/><circle cx="12.500" cy="6.500" r="2.800" fill="none" stroke="#d9d9d9"/></svg></div>
      <div class="ml-[3px] flex h-full w-[22px] items-center justify-center bg-[#3b4453]"><svg width="18" height="18"><path d="M2 1h9l4 4v9H2z" fill="#2f6fb5"/><path d="M5 0v9M1 3.500h10" stroke="#fff"/><path d="M1 10h6v5H1z" fill="#ffb92e"/><path d="M7 11l4 4 6-8" fill="none" stroke="#4fc04d" stroke-width="3"/></svg></div>
      <div class="ml-[3px] flex h-full w-[48px] items-center bg-[#3b4453]"><svg class="ml-[4px]" width="40" height="16"><path d="M.500 2.500h15v11H.500z" fill="none" stroke="#d9d9d9"/><path d="M9 8l4-3M10 4.500h3.500V8M7 8l-4 3M3 8v3.500h3.500" fill="none" stroke="#d9d9d9"/><path d="M24 2h16M24 8h16M24 14h16" stroke="#e6e6e6" stroke-width="1.700"/></svg></div>
    </div>
  </div>

</main>

<!-- plot tooltip -->
<aside class="absolute top-[35px] left-[206px] flex h-[104px] w-[239px] flex-col border border-[#7c7c80] bg-[#f0f1f7] text-[#4c4c50]">
  <span data-w="22" class="mt-[8px] ml-[7px] self-start font-bold">Plot</span>
  <span data-w="223" class="mt-[7px] ml-[7px] self-start">Prints a drawing to a plotter, printer, or file</span>
  <div class="mx-px mt-[8px] h-px bg-[#b4b4b8]"></div>
  <div class="mt-[5px] ml-[7px] flex h-[16px] items-center"><svg width="16" height="16"><path d="M.500 1.500h13v10H.500z" fill="#ffffa5" stroke="#888"/><path d="M0 1h14" stroke="#1029b5" stroke-width="2"/><path d="M3 8h13v7H3z" fill="#111"/><path d="M3 8v7" stroke="#1029d5" stroke-width="2"/><path d="M6 10h4M9 13h5" stroke="#aaa"/></svg><span data-w="29" class="ml-[4px] font-bold">PLOT</span></div>
  <span data-w="125" class="mt-[8px] ml-[7px] self-start font-bold">Press F1 for more help</span>
</aside>
<div class="absolute top-[3px] left-[105px] h-[198px] w-[372px] border-6 border-[#ffc400]"></div>

<!-- taskbar -->
<footer class="relative flex h-[40px] items-center bg-[#292d2f] text-white">
  <div class="flex w-[48px] justify-center"><svg width="16" height="16"><path d="M0 2.200l6.500-.900v6.200H0zM7.500 1.200L16 0v7.500H7.500zM0 8.500h6.500v6.200L0 13.800zM7.500 8.500H16V16l-8.500-1.200z" fill="#fff"/></svg></div>
  <div class="flex h-[40px] w-[344px] items-center border border-[#bdbdbd] bg-[#f1f1f1] text-[#2c2c2c]"><svg class="ml-[11px]" width="17" height="17"><circle cx="10.500" cy="6.500" r="5.500" fill="none" stroke="#222" stroke-width="1.300"/><path d="M6.500 10.500L.500 16.500" stroke="#222" stroke-width="1.300"/></svg><span data-w="128" class="mt-[2px] ml-[11px] text-[14.500px]">Type here to search</span></div>
  <div class="flex w-[48px] justify-center"><svg width="16" height="16"><circle cx="8" cy="8" r="6.800" fill="none" stroke="#fff" stroke-width="1.800"/></svg></div>
  <div class="flex w-[50px] justify-center"><svg width="16" height="16"><path d="M.500 0v2.500h10V0M.500 16v-2.500h10V16M.500 4.500h10v7H.500zM14.500 0v4M14.500 9v7" fill="none" stroke="#fff" stroke-width="1.200"/><path d="M13 4.500h3v3h-3z" fill="#fff"/></svg></div>
  <div class="flex h-full w-[49px] items-center justify-center"><svg width="24" height="24"><circle cx="12" cy="12" r="11.500" fill="#1580d0"/><path d="M1 10C3 2 10 0 14 .500c7 1 10 7 9.500 12-1 4-7 5-9 3 3-3 0-8-5-8-4 0-7 1-8.500 2.500z" fill="#3ccf9a"/><path d="M1 9C4 1 10 0 14 .500c-5 2-9 5-13 8.500z" fill="#35b8e8"/><path d="M9 10c-3 5 1 12 10 10-4 4-12 4-15-1C2 14 5 10 9 10z" fill="#0a4f9e"/><path d="M14.500 15.500c2 2 7 1 9-3l.5 5-4 3c-3-1-6-2-5.500-5z" fill="#292d2f"/></svg></div>
  <div class="flex h-full w-[49px] items-center justify-center"><div class="flex h-full w-[40px] items-center justify-center border-b-3 border-[#76b9ed] pt-[3px]"><svg width="22" height="19"><path d="M0 0h9l2 3h11v15H0z" fill="#f2b632"/><path d="M0 4h22v14H0z" fill="#ffd766"/><path d="M4 19v-8h14v8h-4v-4H8v4z" fill="#3c94df"/></svg></div></div>
  <div class="flex h-full w-[49px] items-center justify-center"><svg width="24" height="24"><path d="M6.500 8V2h11v6" fill="none" stroke="#eee" stroke-width="1.500"/><path d="M1 7h22v17H1z" fill="#f4f4f4"/><path d="M8 11h4v4H8z" fill="#f25022"/><path d="M13 11h4v4h-4z" fill="#7fba00"/><path d="M8 16h4v4H8z" fill="#00a4ef"/><path d="M13 16h4v4h-4z" fill="#ffb900"/></svg></div>
  <div class="flex h-full w-[49px] items-center justify-center"><svg width="24" height="22"><path d="M12 0l12 8v14H0V8z" fill="#0a62b5"/><path d="M3 7h18l-9 8z" fill="#f4f4f4"/><path d="M0 8l12 8 12-8v14H0z" fill="#2aa7ea"/><path d="M3 8h18l-9 7.500z" fill="#f4f4f4"/><path d="M24 8v14L12 15z" fill="#53cdf7"/></svg></div>
  <div class="flex h-full w-[49px] items-center justify-center"><div class="flex h-full w-[40px] items-center justify-center border-b-3 border-[#76b9ed] pt-[3px]"><svg width="23" height="23" viewBox="0 0 24 24"><circle cx="12" cy="12" r="12" fill="#fcc934"/><path d="M12 12L1.600 6A12 12 0 0 1 22.400 6z" fill="#ea4335"/><path d="M12 6h10.400A12 12 0 0 0 1.600 6l5.200 9z" fill="#ea4335"/><path d="M1.600 6A12 12 0 0 0 12 24l5.200-9H7z" fill="#34a853"/><circle cx="12" cy="12" r="5.500" fill="#fff"/><circle cx="12" cy="12" r="4.300" fill="#4285f4"/></svg></div></div>
  <div class="flex h-full w-[49px] items-center justify-center"><svg width="24" height="24"><circle cx="12" cy="12" r="12" fill="#e9541f"/><circle cx="12" cy="12" r="5.500" fill="none" stroke="#fff" stroke-width="2" stroke-dasharray="9.500 2"/><circle cx="4.500" cy="12" r="1.800" fill="#fff"/><circle cx="16" cy="5.500" r="1.800" fill="#fff"/><circle cx="16" cy="18.500" r="1.800" fill="#fff"/></svg></div>
  <div class="flex h-full w-[49px] items-center justify-center"><svg width="18" height="24"><path d="M7 1h4v3h1v12H6V4h1z" fill="#27455e"/><path d="M7 5h4v9H7z" fill="#3a9be0"/><path d="M7 9h4v3H7z" fill="#8cd0ff"/><path d="M1 17h16v2H1zM7 19h4v4H7z" fill="#c9ccd0"/><path d="M7 21h4" stroke="#c33"/></svg></div>
  <div class="flex h-full w-[49px] items-center justify-center"><svg width="23" height="23" viewBox="0 0 24 24"><circle cx="12" cy="12" r="12" fill="#7a3aa6"/><path d="M12 4a8 8 0 0 0-3 15.500v-3c-2 .500-3-.500-3.500-2 1 0 1.500 1.500 3.500 1l.5-1c-3 0-4-2-4-4 0-1 .5-2 1-2.500V6c1 0 2 .500 2.500 1h6c.5-.500 1.500-1 2.500-1v2c.5.500 1 1.500 1 2.500 0 2-1 4-4 4l.5 1.500v3.500A8 8 0 0 0 12 4z" fill="#fff"/></svg></div>
  <div class="flex h-full w-[49px] items-center justify-center"><svg width="20" height="22"><use href="#tex"/></svg></div>
  <div class="flex h-full w-[49px] items-center justify-center"><svg width="24" height="24"><ellipse cx="13" cy="13" rx="10" ry="8" fill="none" stroke="#e77a2d" stroke-width="2" transform="rotate(-35 12 12)"/><path d="M1 0h6l15 24h-6z" fill="#0a0a0a" stroke="#ddd" stroke-width=".8"/><path d="M22 0L13 11M11 13L2 24" stroke="#eee" stroke-width="1.500"/></svg></div>
  <div class="flex h-full w-[49px] items-center justify-center"><div class="flex h-full w-[40px] items-center justify-center border-b-3 border-[#76b9ed] pt-[3px]"><svg width="20" height="22"><use href="#tex"/></svg></div></div>
  <div class="flex h-full w-[49px] items-center justify-center"><div class="flex h-full w-[40px] items-center justify-center border-b-3 border-[#76b9ed] pt-[3px]"><svg width="24" height="22"><path d="M0 6l7 1 6-3 8-4 2 5-1 9c-2 6-9 6-13 3-4 0-6-3-5-6z" fill="#a0a19c"/><circle cx="12" cy="8" r="2.800" fill="#fff"/><circle cx="18" cy="8" r="2.500" fill="#fff"/><circle cx="12.500" cy="8.500" r="1.300"/><circle cx="17.500" cy="8.500" r="1.300"/><path d="M9 14c4 2 8 2 11-1" stroke="#222" fill="none" stroke-width="1.500"/><path d="M15 14l8 7" stroke="#ddd" stroke-width="2"/></svg></div></div>
  <div class="flex h-full w-[48px] items-center justify-center border-b-3 border-[#76b9ed] bg-[#54575a] pt-[3px]"><svg width="24" height="24"><path d="M0 0h24v24H0z" fill="#f7e9e6"/><path d="M9 3h6l5 18h-4l-1-4H9l-1 4H4z" fill="#c31f24"/><path d="M12 8l2 6h-4z" fill="#f7e9e6"/></svg></div>
  <svg class="ml-[574px]" width="64" height="18"><path d="M.500 11.500l6-6 6 6" fill="none" stroke="#fff" stroke-width="1.300"/><path d="M27.500 3.500h11v9H26M22.500 3.500h4v4h-4zM24.500 8v8M31.500 13v3M28 16.500h7" fill="none" stroke="#fff" stroke-width="1.100"/><path d="M46.500 6.500h2l4-4v12l-4-4h-2zM54.500 6c1.500 1 1.500 4 0 5M57 4c3 2 3 7 0 9M59.500 2.500c4 3 4 9 0 12" fill="none" stroke="#fff" stroke-width="1.100"/></svg>
  <span data-w="23" class="ml-[8px]">ENG</span>
  <div class="ml-[12px] flex w-[54px] flex-col items-center gap-[4px]"><span data-w="49">10:04 AM</span><span data-w="52">3/11/2021</span></div>
  <svg class="ml-[17px]" width="17" height="18"><path d="M.600 1.600h15v11H11l-3 3-3-3H.600z" fill="none" stroke="#fff" stroke-width="1.200"/></svg>
  <div class="ml-auto h-full w-[5px] border-l border-[#6b6e70]"></div>
</footer>

<script>
  // Model-space grid: a major line every fifth minor line.
  const ns = 'http://www.w3.org/2000/svg', grid = document.getElementById('grid'), step = 81.76 / 5;
  const line = (x, y, w, h, c) => { const r = document.createElementNS(ns, 'rect'); for (const [k, v] of Object.entries({ x, y, width: w, height: h, fill: c })) r.setAttribute(k, v); grid.appendChild(r); };
  for (const major of [false, true]) {
    const c = major ? '#303747' : '#262d38';
    for (let i = -5; i < 120; i++) if ((i % 5 === 0) === major) { const x = Math.floor(63.4 + i * step); if (x >= 6) line(x, 179, 1, 828, c); }
    for (let i = -5; i < 60; i++) if ((i % 5 === 0) === major) line(6, Math.floor(174.6 + i * step), 1908, 1, c);
  }
  document.querySelectorAll('[data-w]').forEach(e => {
    e.style.flex = 'none'; e.style.width = 'max-content';
    const w = +e.dataset.w, natural = e.offsetWidth;
    e.style.width = w + 'px'; e.style.transformOrigin = '0 50%'; e.style.transform = `scaleX(${(w / natural).toFixed(4)})`;
  });
</script>
</body>
</html>
